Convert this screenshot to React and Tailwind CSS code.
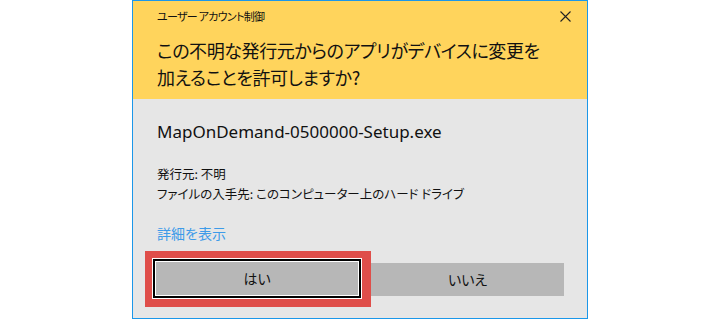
export default function App() {
  const jp = "font-['Noto_Sans_CJK_JP',sans-serif] [font-feature-settings:'palt']";
  return (
    <div className="w-[720px] h-[320px] bg-white flex justify-start">
      <div className={`ml-[132px] w-[456px] h-[319px] border border-[#1b97e9] bg-[#e6e6e6] flex flex-col ${jp}`}>
        <div className="h-[98px] shrink-0 bg-[#ffd45c] pl-[24px] pr-[16px] flex flex-col">
          <div className="h-[31px] shrink-0 flex items-center justify-between">
            <span className="text-[11px] tracking-[-0.7px] text-[#111]">ユーザー アカウント制御</span>
            <svg width="11" height="11" viewBox="0 0 11 11">
              <path d="M0.5 0.5 L10.5 10.5 M10.5 0.5 L0.5 10.5" stroke="#222" strokeWidth="1.1" fill="none" />
            </svg>
          </div>
          <div className="mt-[5px] shrink-0 whitespace-nowrap text-[18px] tracking-[-0.4px] leading-[27px] text-[#111]">
            この不明な発行元からのアプリがデバイスに変更を<br />加えることを許可しますか?
          </div>
        </div>
        <div className="flex flex-col pl-[24px]">
          <div className="mt-[21px] h-[24px] flex items-center text-[17px] text-[#111] font-['Noto_Sans',sans-serif]">
            MapOnDemand-0500000-Setup.exe
          </div>
          <div className="mt-[20px] text-[12.5px] leading-[20px] text-[#111]">
            <div>発行元: 不明</div>
            <div>ファイルの入手先: このコンピューター上のハード ドライブ</div>
          </div>
          <div className="mt-[19px] h-[20px] flex items-center text-[14px] text-[#3d9be9]">詳細を表示</div>
        </div>
        <div className="mt-[8px] ml-[12px] flex items-center">
          <div className="w-[226px] h-[56px] bg-[#df4e4a] pl-[7px] pt-[7px]">
            <div className="w-[210px] h-[41px] border border-white">
              <div className="w-full h-full border-2 border-black">
                <div className="w-full h-full border border-white bg-[#b7b7b7] flex items-center justify-center text-[14px] text-[#111]">
                  はい
                </div>
              </div>
            </div>
          </div>
          <div className="w-[193px] h-[33px] bg-[#b7b7b7] flex items-center justify-center text-[14px] text-[#111]">
            いいえ
          </div>
        </div>
      </div>
    </div>
  );
}
